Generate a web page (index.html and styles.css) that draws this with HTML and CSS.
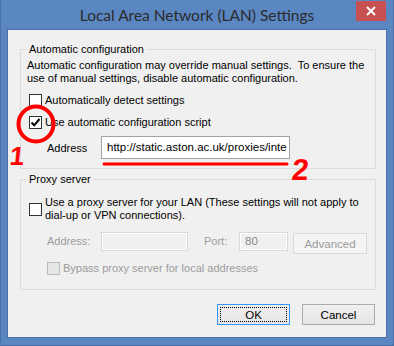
FILE: index.html
```html
<!DOCTYPE html>
<html lang="en">
<head>
    <meta charset="UTF-8">
    <title>Local Area Network (LAN) Settings</title>
    <link rel="stylesheet" href="styles.css">
</head>
<body>
    <div class="window">
        <div class="titlebar">
            <span></span>
            <h1 class="title">Local Area Network (LAN) Settings</h1>
            <div class="close">
                <svg width="10" height="10" viewBox="0 0 10 10">
                    <path d="M1 1 L9 9 M9 1 L1 9" stroke="#fff" stroke-width="2" fill="none"/>
                </svg>
            </div>
        </div>

        <div class="client">
            <fieldset class="group group-auto">
                <legend>Automatic configuration</legend>
                <p class="note">Automatic configuration may override manual settings.&nbsp; To ensure the<br>use of manual settings, disable automatic configuration.</p>
                <label class="check"><span class="box"></span>Automatically detect settings</label>
                <label class="check check-script">
                    <span class="box">
                        <svg width="11" height="11" viewBox="0 0 11 11">
                            <path d="M1.5 5.5 L4.2 8.3 L9.5 2" stroke="#000" stroke-width="2" fill="none"/>
                        </svg>
                    </span>Use automatic configuration script
                </label>
                <div class="address-row">
                    <span class="address-label">Address</span>
                    <div class="textbox">http://static.aston.ac.uk/proxies/inte</div>
                </div>
            </fieldset>

            <fieldset class="group group-proxy">
                <legend>Proxy server</legend>
                <label class="check check-proxy"><span class="box"></span><span>Use a proxy server for your LAN (These settings will not apply to<br>dial-up or VPN connections).</span></label>
                <div class="proxy-row">
                    <span class="dim address-label">Address:</span>
                    <div class="textbox disabled proxy-address"></div>
                    <span class="dim port-label">Port:</span>
                    <div class="textbox disabled proxy-port">80</div>
                    <div class="btn btn-disabled">Advanced</div>
                </div>
                <label class="check check-bypass dim"><span class="box box-disabled"></span>Bypass proxy server for local addresses</label>
            </fieldset>

            <div class="actions">
                <div class="btn btn-default"><span class="focus">OK</span></div>
                <div class="btn">Cancel</div>
            </div>
        </div>

        <!-- red markup drawn on top of the screenshot -->
        <svg class="marks" width="394" height="346" viewBox="0 0 394 346">
            <circle cx="36" cy="124" r="17.5" stroke="#f00" stroke-width="4" fill="none"/>
            <path d="M104 164 L287 164" stroke="#f00" stroke-width="3" stroke-linecap="round"/>
        </svg>
        <span class="mark mark-one">1</span>
        <span class="mark mark-two">2</span>
    </div>
</body>
</html>
```

FILE: styles.css
```css
body {
    margin: 0;
    font-family: "Liberation Sans", Arial, sans-serif;
    font-size: 11px;
    color: #000;
}
.window {
    position: relative;
    width: 394px;
    height: 346px;
    box-sizing: border-box;
    background-color: #5a86c2;
    border: 1px solid #4a72aa;
    border-top: 0;
    display: flex;
    flex-direction: column;
}
.titlebar {
    height: 29px;
    display: grid;
    grid-template-columns: 1fr auto 1fr;
}
.title {
    margin: 0;
    padding-top: 6px;
    font-family: Lato, "Open Sans", sans-serif;
    font-weight: normal;
    font-size: 15.5px;
    color: #2b2b2b;
}
.close {
    justify-self: end;
    margin: 1px 7px 0 0;
    width: 30px;
    height: 20px;
    background-color: #c75050;
    display: flex;
    justify-content: center;
    align-items: center;
}
.close svg {
    display: block;
}
.client {
    flex: 1;
    margin: 0 6px 7px;
    border: 1px solid #4b6fa2;
    background-color: #f0f0f0;
    padding: 13px 10px 0 12px;
}
.group {
    margin: 0;
    padding: 3px 8px 9px 6px;
    border: 1px solid #dcdcdc;
    min-width: 0;
}
.group legend {
    padding: 0 2px;
    line-height: 13px;
}
.note {
    margin: 0;
    line-height: 13px;
}
.check {
    display: flex;
    align-items: center;
    line-height: 13px;
    margin-top: 9px;
    padding-left: 2px;
}
.box {
    width: 11px;
    height: 11px;
    border: 1px solid #333;
    background-color: #fff;
    margin-right: 3px;
    flex: none;
    display: flex;
    align-items: center;
    justify-content: center;
}
.box svg {
    display: block;
}
.address-row {
    display: flex;
    align-items: center;
    margin-top: 7px;
    padding-left: 20px;
}
.address-label {
    width: 54px;
}
.textbox {
    width: 177px;
    height: 21px;
    border: 1px solid #a4a4a4;
    background-color: #fff;
    padding: 0 5px;
    line-height: 21px;
    white-space: nowrap;
    overflow: hidden;
    font-size: 11.5px;
}
.group-proxy {
    margin-top: 4px;
    padding-top: 10px;
    padding-bottom: 14px;
}
.check-proxy {
    margin-top: 0;
}
.proxy-row {
    display: flex;
    align-items: flex-start;
    margin-top: 10px;
    padding-left: 20px;
}
.dim {
    color: #9c9c9c;
}
.proxy-row .dim {
    line-height: 19px;
}
.textbox.disabled {
    height: 17px;
    line-height: 17px;
    border-color: #d9d9d9;
    background-color: #f0f0f0;
    box-shadow: inset 0 0 0 1px #fff;
    color: #8a8a8a;
}
.proxy-address {
    width: 75px;
}
.port-label {
    margin-left: 16px;
    width: 35px;
}
.proxy-port {
    width: 37px;
}
.btn {
    width: 71px;
    height: 19px;
    border: 1px solid #acacac;
    background: linear-gradient(#f0f0f0, #e5e5e5);
    display: flex;
    align-items: center;
    justify-content: center;
    font-size: 11.5px;
}
.proxy-row .btn {
    margin: 1px 0 0 5px;
    width: 72px;
}
.btn-disabled {
    border-color: #d9d9d9;
    background: #f4f4f4;
    color: #9c9c9c;
}
.check-bypass {
    margin-top: 8px;
    padding-left: 20px;
}
.box-disabled {
    background-color: #e6e6e6;
    border-color: #bcbcbc;
}
.actions {
    display: flex;
    justify-content: flex-end;
    gap: 12px;
    margin-top: 14px;
    padding-right: 1px;
}
.btn-default {
    border-color: #3399ff;
}
.focus {
    align-self: stretch;
    flex: 1;
    margin: 2px;
    border: 1px dotted #000;
    display: flex;
    align-items: center;
    justify-content: center;
}
.marks {
    position: absolute;
    left: -1px;
    top: 0;
}
.mark {
    position: absolute;
    color: #f00;
    font-weight: bold;
    font-family: "Liberation Sans", Arial, sans-serif;
    line-height: 1;
    transform: skewX(-6deg);
}
.mark-one {
    left: 9px;
    top: 143px;
    font-size: 26px;
}
.mark-two {
    left: 291px;
    top: 155px;
    font-size: 30px;
}
```
